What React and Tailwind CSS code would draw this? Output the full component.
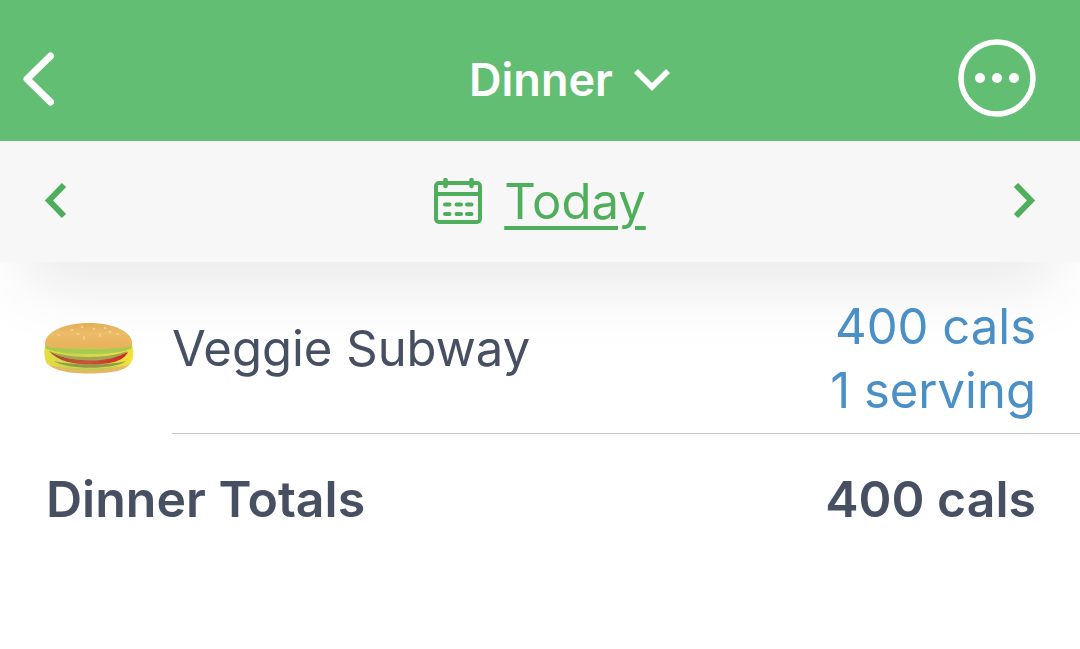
import { useState } from "react";

const days = ["Yesterday", "Today", "Tomorrow"];

const foods = [
    { name: "Veggie Subway", cals: 400, servings: 1 },
];

const SandwichIcon = () => (
    <svg className="w-[90px] h-[54px]" viewBox="0 0 90 54" aria-hidden="true">
        <defs>
            <linearGradient id="bun" x1="0" y1="0" x2="0" y2="1">
                <stop offset="0" stopColor="#e3ad58" />
                <stop offset="0.4" stopColor="#ecbc6a" />
                <stop offset="1" stopColor="#e8b258" />
            </linearGradient>
            <linearGradient id="filling" x1="0" y1="0" x2="1" y2="0">
                <stop offset="0" stopColor="#e6de40" />
                <stop offset="0.3" stopColor="#c9d650" />
                <stop offset="0.75" stopColor="#d9de48" />
                <stop offset="1" stopColor="#f7e236" />
            </linearGradient>
            <linearGradient id="tomato" x1="0" y1="0" x2="1" y2="0">
                <stop offset="0" stopColor="#a8482c" />
                <stop offset="0.5" stopColor="#c9553a" />
                <stop offset="1" stopColor="#d0281f" />
            </linearGradient>
        </defs>
        <path d="M2 38C3 48 20 52.500 45 52.500S86 49 88 38V30H2Z" fill="#e3b862" />
        <path d="M1 24C0 30 0 38 3 43C14 49 76 49 86 43C90 38 90 30 88 24Z" fill="url(#filling)" />
        <path d="M1 24C12 29 76 29 88 24L87 28C76 32 62 33 45 33C28 33 14 32 2 28Z" fill="#a9ca50" />
        <path d="M10 40C22 44 68 45 82 40C72 49 22 49 10 40Z" fill="#929a48" />
        <path d="M18 45C32 49 60 49 76 44C66 50 30 51 18 45Z" fill="#b5d14e" />
        <path d="M5 30C18 38 34 39 47 38.500C62 38 76 34 84 31C80 40 66 43.500 47 43.500C28 43.500 14 40 5 30Z" fill="url(#tomato)" />
        <path d="M5 30C18 35 34 36 47 36C62 36 75 33 84 30C75 37 61 39.500 47 39.500C29 39.500 15 36 5 30Z" fill="#a8a350" />
        <path d="M1 24C0 11 20 2 45 2S90 11 88 24C82 28 65 27.500 45 27.500S7 28 1 24Z" fill="url(#bun)" />
        <g fill="#f3d18c">
            <ellipse cx="28" cy="9" rx="1.500" ry="1" />
            <ellipse cx="38" cy="6" rx="1.500" ry="1" />
            <ellipse cx="50" cy="8" rx="1.500" ry="1" />
            <ellipse cx="61" cy="7" rx="1.500" ry="1" />
            <ellipse cx="34" cy="13" rx="1.500" ry="1" />
            <ellipse cx="66" cy="11" rx="1.500" ry="1" />
            <ellipse cx="15" cy="14" rx="1.500" ry="1" />
            <ellipse cx="40" cy="17" rx="1" ry="2" />
            <ellipse cx="56" cy="14" rx="1" ry="2" />
            <ellipse cx="74" cy="13" rx="1.500" ry="1" />
        </g>
    </svg>
);

const CalendarIcon = () => (
    <svg className="w-12 h-12" viewBox="0 0 48 48" fill="none" stroke="currentColor" strokeWidth="4" strokeLinecap="round" aria-hidden="true">
        <rect x="2" y="5" width="44" height="39" rx="3" />
        <path d="M2 16H46" />
        <path d="M11.500 2V8M37.500 2V8" strokeWidth="4.500" />
        <path d="M11 26.500H15.500M22.500 26.500H27M33 26.500H37.500M11 36H15.500M22.500 36H27M33 36H37.500" />
    </svg>
);

const App = () => {
    const [day, setDay] = useState(1);

    return (
        <div className="min-h-screen bg-white font-['Inter','Liberation_Sans',sans-serif] text-[#474f62]">
            <header className="grid grid-cols-[1fr_auto_1fr] items-center h-[141px] pt-[15px] pl-5 pr-11 bg-[#62be72] text-white">
                <button type="button" aria-label="Back" className="justify-self-start">
                    <svg className="w-9 h-14" viewBox="0 0 36 56" fill="none" stroke="currentColor" strokeWidth="7" strokeLinecap="round" strokeLinejoin="round">
                        <path d="M30.500 6L7 29L30.500 52" />
                    </svg>
                </button>
                <button type="button" aria-haspopup="menu" className="flex items-center gap-5 pt-1 pl-[86px] text-[45px] leading-[60px] font-semibold">
                    Dinner
                    <svg className="w-10 h-6" viewBox="0 0 40 24" fill="none" stroke="currentColor" strokeWidth="5.500">
                        <path d="M3 3L19 19L35 3" />
                    </svg>
                </button>
                <button type="button" aria-label="More" className="justify-self-end">
                    <svg className="w-[78px] h-[78px]" viewBox="0 0 78 78" fill="currentColor">
                        <circle cx="39" cy="39" r="36" fill="none" stroke="currentColor" strokeWidth="5.500" />
                        <circle cx="22" cy="39" r="5" />
                        <circle cx="39" cy="39" r="5" />
                        <circle cx="56" cy="39" r="5" />
                    </svg>
                </button>
            </header>

            <nav className="flex items-center justify-between h-[121px] px-11 bg-[#f7f7f7] text-[#4fae5b] shadow-[0_45px_70px_-25px_rgba(0,0,0,0.1)]">
                <button type="button" aria-label="Previous day" onClick={() => setDay(Math.max(day - 1, 0))}>
                    <svg className="w-6 h-10" viewBox="0 0 24 40" fill="none" stroke="currentColor" strokeWidth="6">
                        <path d="M20 3L5 18.500L20 34" />
                    </svg>
                </button>
                <button type="button" className="flex items-center gap-[22px] text-[49px] leading-[64px]">
                    <CalendarIcon />
                    <span className="underline decoration-[4px] underline-offset-[7px]">{days[day]}</span>
                </button>
                <button type="button" aria-label="Next day" onClick={() => setDay(Math.min(day + 1, 2))}>
                    <svg className="w-6 h-10" viewBox="0 0 24 40" fill="none" stroke="currentColor" strokeWidth="6">
                        <path d="M4 3L19 18.500L4 34" />
                    </svg>
                </button>
            </nav>

            <main className="text-[49px] leading-[64px]">
                <ul>
                    {foods.map((food) => (
                        <li key={food.name} className="flex items-center pl-11">
                            <SandwichIcon />
                            <div className="flex flex-1 items-center justify-between ml-[38px] pt-[33px] pb-[10px] pr-11 border-b border-[#c8c8ca]">
                                <span className="pb-5">{food.name}</span>
                                <div className="text-right text-[#4a90c6]">
                                    <p>{food.cals} cals</p>
                                    <p>{food.servings} serving</p>
                                </div>
                            </div>
                        </li>
                    ))}
                </ul>
                <div className="flex items-center justify-between pt-[33px] pl-[46px] pr-11 text-[50px] leading-[64px] font-semibold">
                    <h2>Dinner Totals</h2>
                    <p>{foods.reduce((sum, food) => sum + food.cals, 0)} cals</p>
                </div>
            </main>
        </div>
    );
};

export default App;
